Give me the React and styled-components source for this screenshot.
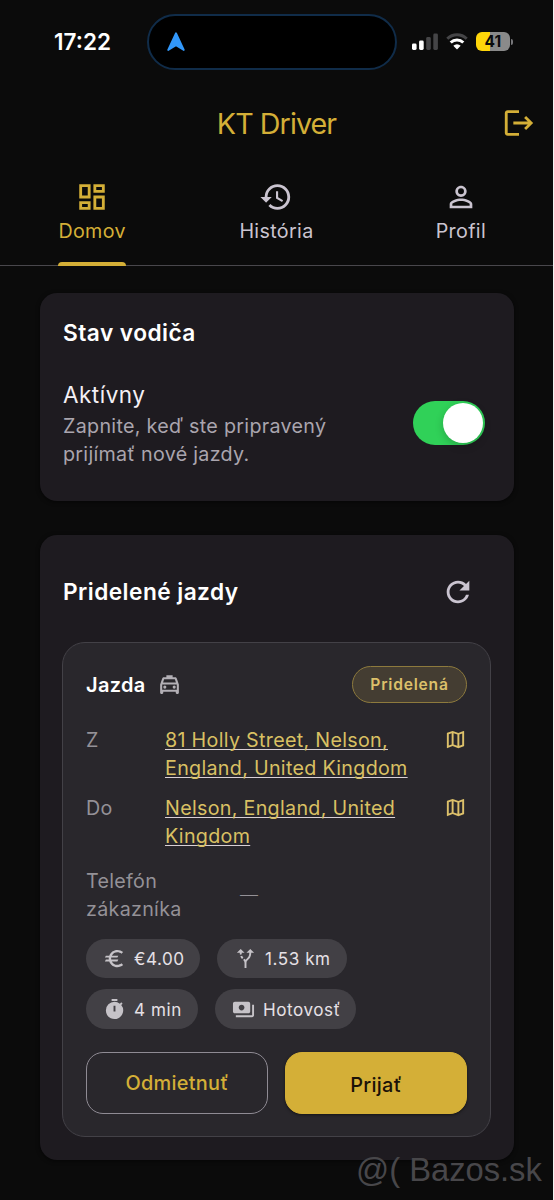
import React, { useState } from 'react';

import styled, { createGlobalStyle } from 'styled-components';
import {
  MdAltRoute,
  MdEuro,
  MdHistory,
  MdOutlineDashboard,
  MdOutlineLocalTaxi,
  MdOutlineMap,
  MdPayments,
  MdPersonOutline,
  MdRefresh,
  MdTimer,
} from 'react-icons/md';

const GlobalStyle = createGlobalStyle`
  * {
    box-sizing: border-box;
  }
  body {
    margin: 0;
    background-color: #0b0b0b;
    font-family: Inter, 'Liberation Sans', sans-serif;
  }
  button {
    font-family: inherit;
    padding: 0;
    border: none;
    background: none;
    cursor: pointer;
  }
  svg {
    display: block;
    flex-shrink: 0;
  }
`;

const Screen = styled.div`
  position: relative;
  display: flex;
  flex-direction: column;
  width: 554px;
  height: 1200px;
  overflow: hidden;
  background-color: #0b0b0b;
  border-right: 1px solid #f2f2f2;
`;

const StatusBar = styled.div`
  display: flex;
  align-items: center;
  height: 83px;
  padding-left: 54px;
`;

const Clock = styled.div`
  width: 93px;
  font-size: 22.5px;
  font-weight: 600;
  letter-spacing: 0;
  color: #ffffff;
`;

const Island = styled.div`
  display: flex;
  align-items: center;
  width: 250px;
  height: 56px;
  padding-left: 17.5px;
  border: 2px solid #102c49;
  border-radius: 28px;
  background-color: #000000;
`;

const Indicators = styled.div`
  display: flex;
  align-items: center;
  gap: 8px;
  margin-left: 15px;
`;

const Battery = styled.div`
  display: flex;
  align-items: center;
  gap: 1px;
`;

const BatteryBody = styled.div`
  width: 34px;
  height: 19px;
  border-radius: 6px;
  background: linear-gradient(to right, #ffd60a 41%, #8a8a8a 41%);
  font-size: 15.5px;
  font-weight: 700;
  line-height: 19px;
  letter-spacing: 0.3px;
  text-align: center;
  color: #0b0b0b;
`;

const BatteryCap = styled.div`
  width: 2px;
  height: 6px;
  border-radius: 0 2px 2px 0;
  background-color: #77777a;
`;

const Header = styled.header`
  display: grid;
  grid-template-columns: 1fr auto 1fr;
  align-items: center;
  height: 80px;
`;

const AppTitle = styled.h1`
  grid-column: 2;
  margin: 0;
  font-size: 28.7px;
  font-weight: 400;
  letter-spacing: -0.95px;
  color: #d4af37;
`;

const LogoutButton = styled.button`
  justify-self: end;
  margin-right: 17px;
  color: #d4af37;
`;

const TabBar = styled.nav`
  display: grid;
  grid-template-columns: repeat(3, 1fr);
  height: 103px;
  border-bottom: 1px solid #49474c;
`;

const Tab = styled.button`
  display: flex;
  flex-direction: column;
  align-items: center;
  padding-top: 17px;
  font-size: 19.7px;
  line-height: 28px;
  letter-spacing: 0.35px;
  color: ${(props) => (props.$active ? '#d4af37' : '#cac4d0')};
`;

const TabLabel = styled.span`
  display: flex;
  flex-direction: column;
  flex-shrink: 0;
  height: 52px;
  padding-top: 3px;
  margin-bottom: -1px;

  &::after {
    content: '';
    height: 4px;
    margin-top: auto;
    border-radius: 4px 4px 0 0;
    background-color: ${(props) => (props.$active ? '#d4af37' : 'transparent')};
  }
`;

const Content = styled.main`
  display: flex;
  flex-direction: column;
  gap: 34px;
  padding: 27px 39px 0 40px;
`;

const Card = styled.section`
  height: ${(props) => props.$height};
  padding: 0 23px 0 22px;
  border-radius: 17px;
  background-color: #1e1b20;
  box-shadow: 0 1px 4px rgba(0, 0, 0, 0.6);
`;

const CardHeader = styled.div`
  display: flex;
  align-items: center;
  justify-content: space-between;
  padding: ${(props) => props.$padding};
`;

const CardTitle = styled.h2`
  margin: 0;
  font-size: 22.7px;
  font-weight: 600;
  line-height: 34px;
  letter-spacing: 0.45px;
  color: #ffffff;
`;

const RefreshButton = styled.button`
  margin-right: 16px;
  color: #cac4d0;
`;

const StatusRow = styled.div`
  display: flex;
  align-items: center;
  justify-content: space-between;
  padding: 0 6px 0 1px;
`;

const StatusName = styled.div`
  font-size: 22.5px;
  line-height: 34px;
  letter-spacing: 0.5px;
  color: #f4f0f5;
`;

const StatusHint = styled.div`
  width: 290px;
  font-size: 19.7px;
  line-height: 28.4px;
  letter-spacing: 0.3px;
  color: #aaa5ae;
`;

const Switch = styled.button`
  display: flex;
  justify-content: ${(props) => (props.$on ? 'flex-end' : 'flex-start')};
  width: 72px;
  height: 44px;
  padding: 2px;
  border-radius: 22px;
  background-color: ${(props) => (props.$on ? '#30d158' : '#39393d')};

  &::after {
    content: '';
    width: 40px;
    height: 40px;
    border-radius: 50%;
    background-color: #ffffff;
    box-shadow: 0 3px 9px rgba(0, 0, 0, 0.2);
  }
`;

const Ride = styled.article`
  display: flex;
  flex-direction: column;
  height: 495px;
  padding: 23px;
  border: 1px solid #434147;
  border-radius: 23px;
  background-color: #29272c;
`;

const RideHeader = styled.div`
  display: flex;
  align-items: center;
  height: 37px;
  margin-bottom: 23px;
  color: #b3b0b6;
`;

const RideTitle = styled.h3`
  margin: 0 11px 0 0;
  font-size: 20px;
  font-weight: 600;
  letter-spacing: 0.3px;
  color: #ffffff;
`;

const Badge = styled.span`
  width: 115px;
  height: 37px;
  margin-left: auto;
  border: 1px solid #8d7a3d;
  border-radius: 19px;
  background-color: #443d32;
  font-size: 15.6px;
  font-weight: 600;
  line-height: 35px;
  letter-spacing: 0.8px;
  text-align: center;
  color: #dcc06a;
`;

const Detail = styled.div`
  display: grid;
  grid-template-columns: ${(props) => props.$columns || '79px 1fr 23px'};
  margin-bottom: ${(props) => props.$spacing || '11px'};
  font-size: 19.7px;
  line-height: 28.3px;
  letter-spacing: 0.3px;
  color: #dcc06a;
`;

const DetailLabel = styled.span`
  color: #949197;
`;

const Address = styled.a`
  color: #d9c063;
  text-decoration: underline;
  text-decoration-color: #d8d0d5;
  text-decoration-thickness: 1.4px;
  text-decoration-skip-ink: none;
  text-underline-offset: 2px;
  cursor: pointer;
`;

const AddressCell = styled.div`
  width: 256px;
`;

const MapIcon = styled(MdOutlineMap)`
  margin-top: 2px;
`;

const EmptyValue = styled.span`
  align-self: center;
  font-size: 18px;
  font-weight: 300;
  color: #949197;
`;

const Chips = styled.div`
  display: flex;
  flex-wrap: wrap;
  gap: 11px 17px;
  height: 90px;
`;

const Chip = styled.span`
  display: flex;
  align-items: center;
  gap: 8px;
  width: ${(props) => props.$width};
  height: 39.5px;
  padding-left: 17px;
  border-radius: 20px;
  background-color: #424045;
  font-size: 17.1px;
  letter-spacing: 0.55px;
  white-space: nowrap;
  color: #e6e1e6;

  svg {
    color: #c6c3c8;
  }
`;

const Actions = styled.div`
  display: grid;
  grid-template-columns: 1fr 1fr;
  gap: 17px;
  margin-top: 23px;
`;

const ActionButton = styled.button`
  height: 62px;
  border: 1px solid #8f8b94;
  border-radius: 17px;
  font-size: 19.9px;
  font-weight: 500;
  letter-spacing: 0.3px;
  color: #d4af37;
`;

const AcceptButton = styled(ActionButton)`
  padding-top: 5px;
  border-color: #d4af37;
  background-color: #d4af37;
  box-shadow: 0 1px 3px rgba(0, 0, 0, 0.5);
  color: #1a1208;
`;

const Watermark = styled.div`
  position: absolute;
  top: 1150px;
  left: 356px;
  font-family: 'Liberation Sans', Arial, sans-serif;
  font-size: 32.7px;
  line-height: 40px;
  white-space: nowrap;
  color: #48474a;
`;

const tabs = [
  { name: 'Domov', Icon: MdOutlineDashboard },
  { name: 'História', Icon: MdHistory },
  { name: 'Profil', Icon: MdPersonOutline },
];

const addresses = [
  { label: 'Z', address: '81 Holly Street, Nelson, England, United Kingdom', spacing: '11px' },
  { label: 'Do', address: 'Nelson, England, United Kingdom', spacing: '17px' },
];

const facts = [
  { text: '€4.00', Icon: MdEuro, width: '114px' },
  { text: '1.53 km', Icon: MdAltRoute, width: '130px' },
  { text: '4 min', Icon: MdTimer, width: '112px' },
  { text: 'Hotovosť', Icon: MdPayments, width: '141px' },
];

function NavigationArrow() {
  return (
    <svg width="18" height="20" viewBox="0 0 18 20">
      <path
        d="M9 1.2 16.8 18 9 13.2 1.2 18z"
        fill="#3298fb"
        stroke="#3298fb"
        strokeWidth="1.8"
        strokeLinejoin="round"
      />
    </svg>
  );
}

function SignalIcon() {
  return (
    <svg width="26" height="17" viewBox="0 0 26 17">
      <rect x="0" y="10.5" width="4.6" height="6.5" rx="1.4" fill="#fff" />
      <rect x="7.1" y="7.5" width="4.6" height="9.5" rx="1.4" fill="#fff" />
      <rect x="14.2" y="4" width="4.6" height="13" rx="1.4" fill="#454547" />
      <rect x="21.3" y="0.5" width="4.6" height="16.5" rx="1.4" fill="#454547" />
    </svg>
  );
}

function WifiIcon() {
  return (
    <svg width="22" height="17" viewBox="0 0 22 17" fill="none" strokeWidth="3">
      <path d="M1.3 5.8a13.8 13.8 0 0 1 19.4 0" stroke="#454547" />
      <path d="M4.7 9.5a9 9 0 0 1 12.6 0" stroke="#fff" />
      <path d="M11 16.4 7.3 12.7a5.3 5.3 0 0 1 7.4 0z" fill="#fff" />
    </svg>
  );
}

function LogoutIcon() {
  return (
    <svg width="34" height="34" viewBox="0 0 24 24" fill="currentColor">
      <path d="M17 7l-1.41 1.41L18.17 11H8v2h10.17l-2.58 2.58L17 17l5-5zM4 5h8V3H4c-1.1 0-2 .9-2 2v14c0 1.1.9 2 2 2h8v-2H4z" />
    </svg>
  );
}

export default function App() {
  const [currentTab, setCurrentTab] = useState(0);
  const [active, setActive] = useState(true);

  return (
    <Screen>
      <GlobalStyle />
      <StatusBar>
        <Clock>17:22</Clock>
        <Island>
          <NavigationArrow />
        </Island>
        <Indicators>
          <SignalIcon />
          <WifiIcon />
          <Battery>
            <BatteryBody>41</BatteryBody>
            <BatteryCap />
          </Battery>
        </Indicators>
      </StatusBar>

      <Header>
        <AppTitle>KT Driver</AppTitle>
        <LogoutButton aria-label='Odhlásiť'>
          <LogoutIcon />
        </LogoutButton>
      </Header>

      <TabBar>
        {tabs.map(({ name, Icon }, index) => (
          <Tab
            key={name}
            $active={index === currentTab}
            onClick={() => setCurrentTab(index)}
          >
            <Icon size={34} />
            <TabLabel $active={index === currentTab}>{name}</TabLabel>
          </Tab>
        ))}
      </TabBar>

      <Content>
        <Card $height='208px'>
          <CardHeader $padding='23px 0 28px 1px'>
            <CardTitle>Stav vodiča</CardTitle>
          </CardHeader>
          <StatusRow>
            <div>
              <StatusName>Aktívny</StatusName>
              <StatusHint>Zapnite, keď ste pripravený prijímať nové jazdy.</StatusHint>
            </div>
            <Switch
              role='switch'
              aria-checked={active}
              aria-label='Aktívny'
              $on={active}
              onClick={() => setActive(!active)}
            />
          </StatusRow>
        </Card>

        <Card $height='625px'>
          <CardHeader $padding='40px 0 33px 1px'>
            <CardTitle>Pridelené jazdy</CardTitle>
            <RefreshButton aria-label='Obnoviť'>
              <MdRefresh size={34} />
            </RefreshButton>
          </CardHeader>
          <Ride>
            <RideHeader>
              <RideTitle>Jazda</RideTitle>
              <MdOutlineLocalTaxi size={25} />
              <Badge>Pridelená</Badge>
            </RideHeader>
            {addresses.map(({ label, address, spacing }) => (
              <Detail key={label} $spacing={spacing}>
                <DetailLabel>{label}</DetailLabel>
                <AddressCell>
                  <Address>{address}</Address>
                </AddressCell>
                <MapIcon size={23} />
              </Detail>
            ))}
            <Detail $columns='154px 1fr' $spacing='15px'>
              <DetailLabel>
                Telefón
                <br />
                zákazníka
              </DetailLabel>
              <EmptyValue>—</EmptyValue>
            </Detail>
            <Chips>
              {facts.map(({ text, Icon, width }) => (
                <Chip key={text} $width={width}>
                  <Icon size={23} />
                  {text}
                </Chip>
              ))}
            </Chips>
            <Actions>
              <ActionButton>Odmietnuť</ActionButton>
              <AcceptButton>Prijať</AcceptButton>
            </Actions>
          </Ride>
        </Card>
      </Content>

      <Watermark>@( Bazos.sk</Watermark>
    </Screen>
  );
}
